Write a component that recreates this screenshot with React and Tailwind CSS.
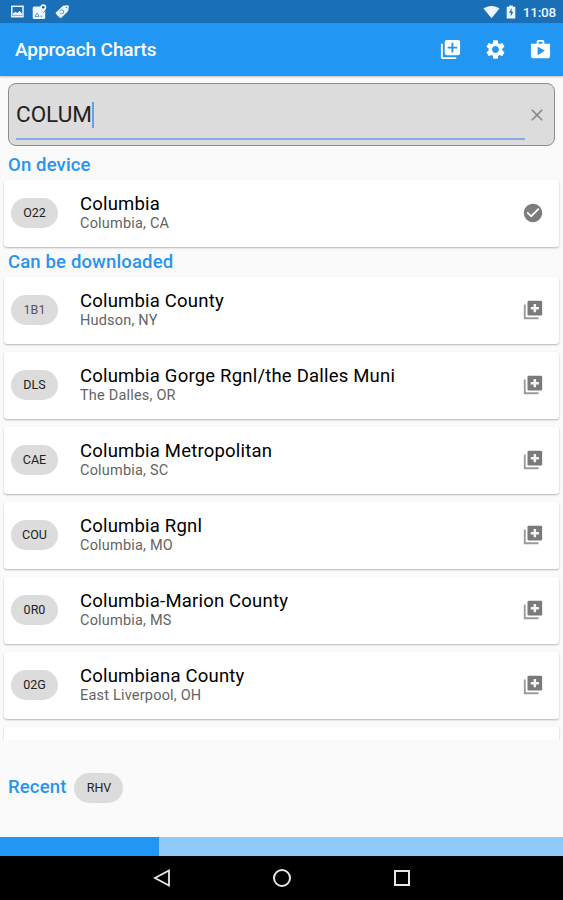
import {
  MdLibraryAdd,
  MdSettings,
  MdShop,
  MdCheckCircle,
  MdClose,
} from "react-icons/md";

const onDevice = [{ code: "O22", name: "Columbia", city: "Columbia, CA" }];

const downloadable = [
  { code: "1B1", name: "Columbia County", city: "Hudson, NY" },
  { code: "DLS", name: "Columbia Gorge Rgnl/the Dalles Muni", city: "The Dalles, OR" },
  { code: "CAE", name: "Columbia Metropolitan", city: "Columbia, SC" },
  { code: "COU", name: "Columbia Rgnl", city: "Columbia, MO" },
  { code: "0R0", name: "Columbia-Marion County", city: "Columbia, MS" },
  { code: "02G", name: "Columbiana County", city: "East Liverpool, OH" },
];

function StatusBar() {
  return (
    <div className="flex h-[23px] shrink-0 items-center justify-between bg-[#1a70b8] pr-[7px] pl-[11px] text-[#eef6fd]">
      <div className="flex items-center gap-[8px]">
        {/* screenshot saved */}
        <svg width="13" height="13" viewBox="0 0 13 13">
          <rect x="0.8" y="1.3" width="11.2" height="10.4" fill="none" stroke="currentColor" strokeWidth="1.5" />
          <path d="M2 10.5V8.5L4.2 6.8L6.2 8L8.5 6L11 8.5V10.5Z" fill="currentColor" />
        </svg>
        {/* map pin */}
        <svg width="15" height="16" viewBox="0 0 15 16">
          <path d="M2 2.5H9C9 5 10 7 11.5 9L13.2 7V13.5Q13.2 15 11.7 15H2Q0.7 15 0.7 13.5V4Q0.7 2.5 2 2.5Z" fill="currentColor" />
          <path d="M11.3 0.3A3 3 0 0 1 14.3 3.2C14.3 5.2 11.3 8.5 11.3 8.5S8.3 5.2 8.3 3.2A3 3 0 0 1 11.3 0.3Z" fill="currentColor" />
          <circle cx="11.2" cy="3.3" r="1.2" fill="#1a4f92" />
          <path d="M3 12.5L5.2 9L7 12.5ZM8.3 12.2H10.5" fill="none" stroke="#6a9fd0" strokeWidth="1" />
        </svg>
        {/* tag */}
        <svg width="15" height="15" viewBox="0 0 15 15">
          <path d="M8 1.8L12.6 1.2Q13.8 1.3 13.8 2.4L13.2 7L6.4 13.7Q5.3 14.4 4.5 13.6L1 10.1Q0.4 9.2 1.2 8.3Z" fill="currentColor" />
          <circle cx="6.7" cy="7.9" r="2" fill="none" stroke="#5e9bd3" strokeWidth="1" strokeDasharray="5 1.3" />
          <circle cx="11.5" cy="3.5" r="0.8" fill="#3f83c4" />
        </svg>
      </div>
      <div className="flex items-center pt-px">
        <svg width="17" height="14" viewBox="0 0 17 14">
          <path d="M8.5 13.3L0.5 3.6C5 0 12 0 16.5 3.6Z" fill="currentColor" />
        </svg>
        <svg className="ml-[6px]" width="10" height="14" viewBox="0 0 10 14">
          <path d="M3.2 0.5H6.8V1.8H9.3V13.5H0.7V1.8H3.2Z" fill="currentColor" />
          <path d="M5.7 3.3L3 7.8H4.8V11.5L7.3 6.8H5.6Z" fill="#1a70b8" />
        </svg>
        <span className="ml-[7px] pt-px text-[13.5px] leading-none font-medium tracking-[-0.2px]">11:08</span>
      </div>
    </div>
  );
}

// list version of "library add", with a heavier plus than the toolbar one
function AddChartIcon() {
  return (
    <svg width="22" height="22" viewBox="0 0 24 24">
      <path d="M3 6V21H18" fill="none" stroke="#9a9a9a" strokeWidth="2" />
      <rect x="6" y="2" width="16" height="16" rx="1.5" fill="#7a7a7a" />
      <path d="M14 5.5V14.5M9.5 10H18.5" fill="none" stroke="#f4f4f4" strokeWidth="2.7" />
    </svg>
  );
}

function Chip({ children, dim }) {
  return (
    <span
      className={`flex h-[30px] items-center justify-center rounded-full bg-[#dcdcdc] pt-px text-[12.5px] ${
        dim ? "text-[#555]" : "text-[#222]"
      }`}
    >
      {children}
    </span>
  );
}

function AirportCard({ airport, saved }) {
  return (
    <div className="flex h-[67px] shrink-0 items-center rounded-[3px] bg-white pr-[15px] pb-px pl-[7px] shadow-[0_1px_2px_rgba(0,0,0,0.28)]">
      <div className="w-[47px]">
        <Chip dim={airport.code === "1B1"}>{airport.code}</Chip>
      </div>
      <div className="ml-[22px] flex-1 pb-px">
        <div className="text-[18.5px] leading-[22px] tracking-[0.2px] text-black">{airport.name}</div>
        <div className="text-[14.5px] leading-[17px] tracking-[0.2px] text-[#646464]">{airport.city}</div>
      </div>
      {saved ? <MdCheckCircle size={22} className="text-[#7c7c7c]" /> : <AddChartIcon />}
    </div>
  );
}

function SectionTitle({ children }) {
  return (
    <h2 className="pl-[4px] text-[18.5px] leading-[30px] font-medium tracking-[0.15px] text-[#2994ef]">
      {children}
    </h2>
  );
}

export default function App() {
  return (
    <div className="flex h-[900px] w-[563px] flex-col overflow-hidden bg-[#fafafa] font-['Roboto',sans-serif]">
      <StatusBar />
      <header className="z-10 flex h-[53px] shrink-0 items-center bg-[#2196f3] pr-[11px] pl-[15px] text-white shadow-[0_1px_2px_rgba(0,0,0,0.25)]">
        <h1 className="flex-1 pt-[2px] text-[19px] font-medium tracking-[-0.1px]">Approach Charts</h1>
        <div className="flex items-center gap-[22px]">
          <MdLibraryAdd size={23} />
          <MdSettings size={23} />
          <MdShop size={23} />
        </div>
      </header>

      <div className="mx-[8px] mt-[7px] flex h-[63px] shrink-0 items-center rounded-[8px] border border-[#8c8c8c] bg-[#dcdcdc] pl-[7px]">
        <div className="flex h-full w-[509px] flex-col justify-end pb-[5px]">
          <div className="flex h-[48px] items-center border-b-2 border-[#84a9e4]">
            <span className="text-[22.5px] text-[#222]">COLUM</span>
            <span className="h-[26px] w-[2px] bg-[#6d9ce8]" />
          </div>
        </div>
        <MdClose size={20} className="ml-[2px] text-[#8b8b8b]" />
      </div>

      <main className="flex h-[594px] shrink-0 flex-col overflow-hidden px-[4px] pt-[4px]">
        <SectionTitle>On device</SectionTitle>
        {onDevice.map((airport) => (
          <AirportCard key={airport.code} airport={airport} saved />
        ))}
        <SectionTitle>Can be downloaded</SectionTitle>
        <div className="flex flex-col gap-[8px]">
          {downloadable.map((airport) => (
            <AirportCard key={airport.code} airport={airport} />
          ))}
          {/* next result, cut off by the end of the list */}
          <div className="h-[67px] shrink-0 rounded-[3px] bg-white shadow-[0_1px_2px_rgba(0,0,0,0.28)]" />
        </div>
      </main>

      <div className="flex flex-1 items-center gap-[8px] pb-px pl-[8px]">
        <span className="text-[18.5px] font-medium tracking-[0.15px] text-[#2994ef]">Recent</span>
        <div className="w-[49px]">
          <Chip>RHV</Chip>
        </div>
      </div>

      <div className="h-[19px] shrink-0 bg-[#90caf9]">
        <div className="h-full w-[159px] bg-[#2196f3]" />
      </div>

      <nav className="flex h-[44px] shrink-0 items-center justify-center gap-[100px] bg-black text-[#e6e6e6]">
        <svg width="20" height="20" viewBox="0 0 20 20" fill="none" stroke="currentColor" strokeWidth="1.8">
          <path d="M17 2.5V17.5L3 10Z" />
        </svg>
        <svg width="20" height="20" viewBox="0 0 20 20" fill="none" stroke="currentColor" strokeWidth="2">
          <circle cx="10" cy="10" r="8" />
        </svg>
        <svg width="20" height="20" viewBox="0 0 20 20" fill="none" stroke="currentColor" strokeWidth="2">
          <rect x="3" y="3" width="14" height="14" />
        </svg>
      </nav>
    </div>
  );
}
